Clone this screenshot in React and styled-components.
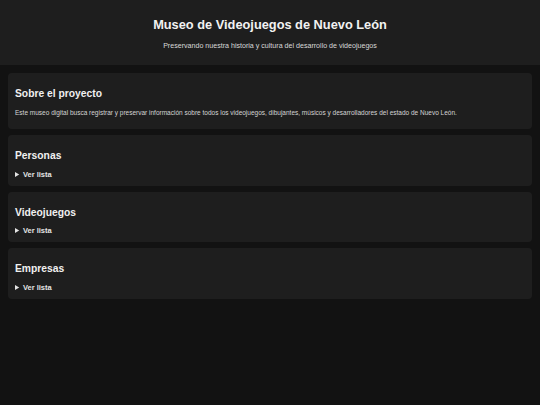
import React from 'react'
import styled, { createGlobalStyle } from 'styled-components'

const GlobalStyle = createGlobalStyle`
  html, body {
    margin: 0;
    padding: 0;
    background: #121212;
    color: #e8e8e8;
    font-family: 'Liberation Sans', Arial, sans-serif;
  }
`

const Header = styled.header`
  background: #1e1e1e;
  text-align: center;
  padding: 17px 8px 14.5px;
`

const Title = styled.h1`
  margin: 0;
  font-size: 12.8px;
  font-weight: bold;
  color: #f2f2f2;
  line-height: 16px;
`

const Subtitle = styled.p`
  margin: 8.5px 0 0;
  font-size: 7.1px;
  line-height: 9px;
  color: #d8d8d8;
`

const Main = styled.main`
  display: flex;
  flex-direction: column;
  gap: 6px;
  padding: 8px;
`

const Card = styled.section`
  background: #1e1e1e;
  border-radius: 4px;
  padding: 14px 7px 7px;
`

const CardTitle = styled.h2`
  margin: 0;
  font-size: 10.3px;
  line-height: 14px;
  font-weight: bold;
  color: #f0f0f0;
`

const Text = styled.p`
  margin: 6.5px 0 5.5px;
  font-size: 6.5px;
  line-height: 9px;
  color: #d4d4d4;
`

const Details = styled.details`
  margin-top: 6.5px;
  font-size: 7.5px;
  line-height: 9px;
  color: #e4e4e4;

  & summary {
    font-weight: bold;
    cursor: pointer;
  }
`

const sections = ['Personas', 'Videojuegos', 'Empresas']

export default function App() {
  return (
    <>
      <GlobalStyle />
      <Header>
        <Title>Museo de Videojuegos de Nuevo León</Title>
        <Subtitle>Preservando nuestra historia y cultura del desarrollo de videojuegos</Subtitle>
      </Header>
      <Main>
        <Card>
          <CardTitle>Sobre el proyecto</CardTitle>
          <Text>
            Este museo digital busca registrar y preservar información sobre todos los videojuegos,
            dibujantes, músicos y desarrolladores del estado de Nuevo León.
          </Text>
        </Card>
        {sections.map((name) => (
          <Card key={name}>
            <CardTitle>{name}</CardTitle>
            <Details>
              <summary>Ver lista</summary>
            </Details>
          </Card>
        ))}
      </Main>
    </>
  )
}
